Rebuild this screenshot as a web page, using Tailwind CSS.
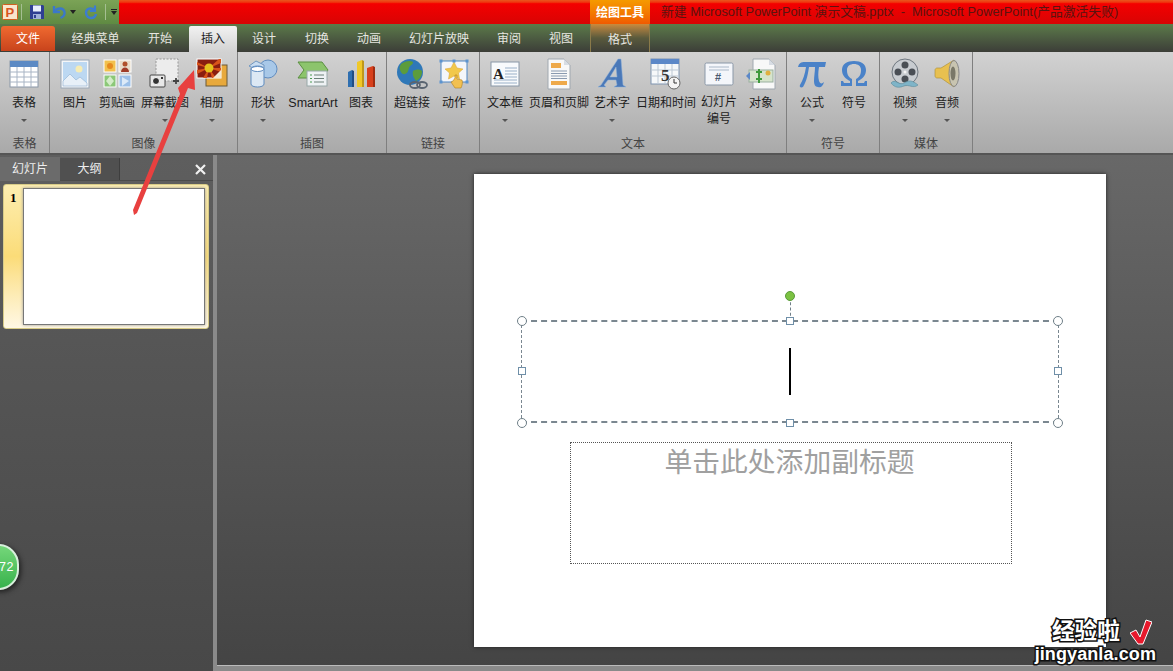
<!DOCTYPE html>
<html lang="zh-CN">
<head>
  <meta charset="utf-8" />
  <title>PowerPoint</title>
  <script src="https://cdn.jsdelivr.net/npm/@tailwindcss/browser@4"></script>
</head>
<body class="relative w-[1173px] h-[671px] overflow-hidden bg-[#4a4a4a] font-['Liberation_Sans','Noto_Sans_CJK_SC',sans-serif] text-[12px] text-[#1c1c1c]">

  <!-- title bar -->
  <div class="flex h-[24px] bg-gradient-to-b from-[#e8561e] via-[#f40000] via-[15%] to-[#d80404]">
    <div class="flex items-center w-[119px] h-full pl-[2px] bg-gradient-to-b from-[#7ba356] to-[#5f8a42]">
      <svg class="w-[16px] h-[16px] shrink-0" viewBox="0 0 16 16"><rect x=".5" y=".5" width="15" height="15" rx="1" fill="#f8e6cc" stroke="#d06020"/><text x="3.500" y="13" font-size="13" font-weight="700" fill="#d8541e" font-family="Liberation Sans">P</text></svg>
      <div class="w-px h-[16px] ml-[3px] bg-[#a5bf92]"></div>
      <svg class="w-[16px] h-[16px] ml-[7px] shrink-0" viewBox="0 0 16 16"><path d="M1 1h13l1 1v13H1z" fill="#2f3f92"/><rect x="4" y="1.500" width="8" height="6" fill="#e8eefb"/><rect x="4" y="10" width="8" height="5" fill="#9fb0d8"/><rect x="5" y="11" width="2" height="3" fill="#2f3f92"/></svg>
      <svg class="w-[15px] h-[16px] ml-[7px] shrink-0" viewBox="0 0 15 16"><path d="M2 2v6h6" fill="none" stroke="#3c78c8" stroke-width="2.400"/><path d="M2.500 7.500c3-4 9-4 10 .5 .5 3-1.500 5-4 6" fill="none" stroke="#3c78c8" stroke-width="2.400"/></svg>
      <svg class="w-[6px] h-[4px] ml-[3px] shrink-0" viewBox="0 0 6 4"><path d="M0 0h6L3 4z" fill="#222"/></svg>
      <svg class="w-[14px] h-[16px] ml-[8px] shrink-0" viewBox="0 0 14 16"><path d="M11 1.500v5.500H6" fill="none" stroke="#3c7cd0" stroke-width="2.200"/><path d="M10.500 6C7 3 2.200 4.500 2 8.500c-.1 3.500 2.500 5.500 5 5.500s4.500-1.500 5-4" fill="none" stroke="#3c7cd0" stroke-width="2.400"/></svg>
      <div class="w-px h-[16px] ml-[7px] bg-[#a5bf92]"></div>
      <div class="flex flex-col items-center gap-[1px] w-[7px] ml-[4px]"><div class="w-[6px] h-px bg-[#222]"></div><div class="w-0 h-0 border-x-[3px] border-x-transparent border-t-[4px] border-t-[#222]"></div></div>
    </div>
    <div class="w-[471px]"></div>
    <div class="flex items-center justify-center w-[60px] h-full pt-[1px] bg-gradient-to-b from-[#f59a00] to-[#f05a00] text-white font-bold">绘图工具</div>
    <div class="flex items-center pl-[11px] whitespace-nowrap text-[#5a1410] text-[12.8px]">新建 Microsoft PowerPoint 演示文稿.pptx&nbsp; -&nbsp; Microsoft PowerPoint(产品激活失败)</div>
  </div>

  <!-- tabs -->
  <div class="flex h-[28px] pt-[2px] bg-gradient-to-b from-[#5c7b49] to-[#3c3e38] text-[#e6e6e0]">
    <div class="flex items-center justify-center w-[54px] h-[25px] ml-px rounded-t-[3px] bg-gradient-to-b from-[#f06a30] to-[#c8431c] text-white">文件</div>
    <div class="flex items-center justify-center w-[81px]">经典菜单</div>
    <div class="flex items-center justify-center w-[48px]">开始</div>
    <div class="flex items-center justify-center w-[48px] h-[26px] ml-[5px] rounded-t-[2px] bg-gradient-to-b from-[#f2f2f2] to-[#d2d2d2] text-[#222]">插入</div>
    <div class="flex items-center justify-center w-[54px]">设计</div>
    <div class="flex items-center justify-center w-[52px]">切换</div>
    <div class="flex items-center justify-center w-[52px]">动画</div>
    <div class="flex items-center justify-center w-[88px]">幻灯片放映</div>
    <div class="flex items-center justify-center w-[52px]">审阅</div>
    <div class="flex items-center justify-center w-[52px]">视图</div>
    <div class="flex items-center justify-center w-[60px] -mt-[2px] pt-[4px] ml-[3px] border-x border-[#8a7a4a] bg-gradient-to-b from-[#c98a3c] via-[#5a5a3c] to-[#3e3f38]">格式</div>
  </div>

  <!-- ribbon -->
  <div class="flex h-[103px] bg-gradient-to-b from-[#d2d2d2] to-[#a9a9a9] border-b-2 border-[#555]">

    <div class="flex flex-col w-[50px] border-r border-[#7f7f7f]">
      <div class="flex flex-1">
        <div class="flex flex-col items-center w-[48px] pt-[6px]">
          <svg class="w-[32px] h-[32px]" viewBox="0 0 32 32"><rect x="2" y="3" width="28" height="26" fill="#fff" stroke="#8a97a8"/><rect x="2" y="3" width="28" height="6" fill="#5c8ac4"/><path d="M2 14h28M2 19h28M2 24h28M9 9v20M16 9v20M23 9v20" stroke="#a8b4c4"/></svg>
          <span class="mt-[4px] whitespace-nowrap">表格</span>
          <div class="w-0 h-0 mt-[7px] border-x-[3px] border-x-transparent border-t-[3px] border-t-[#555]"></div>
        </div>
      </div>
      <div class="h-[18px] text-center text-[#444]">表格</div>
    </div>

    <div class="flex flex-col w-[188px] border-r border-[#7f7f7f]">
      <div class="flex flex-1 pl-[4px]">
        <div class="flex flex-col items-center w-[42px] pt-[6px]">
          <svg class="w-[32px] h-[32px]" viewBox="0 0 32 32"><rect x="2" y="2" width="28" height="28" fill="#f4f6f8" stroke="#9aa8b8"/><rect x="4" y="4" width="24" height="24" fill="#bcd8f2"/><circle cx="20" cy="11" r="3.500" fill="#f6ecb4"/><path d="M4 28v-5l7-7 6 6 4-3 7 6v3z" fill="#e8f0f8" stroke="#8fb0d0" stroke-width=".6"/></svg>
          <span class="mt-[4px] whitespace-nowrap">图片</span>
        </div>
        <div class="flex flex-col items-center w-[42px] pt-[6px]">
          <svg class="w-[32px] h-[32px]" viewBox="0 0 32 32"><rect x="3" y="2" width="12" height="12" fill="#f2c14e" stroke="#fff"/><circle cx="9" cy="8" r="3" fill="#e68a1e"/><rect x="18" y="2" width="12" height="12" fill="#e8dcc8" stroke="#fff"/><circle cx="24" cy="6" r="2.500" fill="#b0502a"/><path d="M20 14c0-6 8-6 8 0z" fill="#a03c28"/><rect x="3" y="17" width="12" height="12" fill="#8cc878" stroke="#fff"/><path d="M9 18l4 5-4 5-4-5z" fill="#d4ecc8"/><rect x="18" y="17" width="12" height="12" fill="#9cc0e8" stroke="#fff"/><path d="M21 19l7 4-7 5z" fill="#dceaf8"/></svg>
          <span class="mt-[4px] whitespace-nowrap">剪贴画</span>
        </div>
        <div class="flex flex-col items-center w-[54px] pt-[6px]">
          <svg class="w-[32px] h-[32px]" viewBox="0 0 32 32"><rect x="7" y="1" width="22" height="22" fill="#ececec" stroke="#999" stroke-dasharray="2 1.500"/><rect x="1" y="17" width="15" height="12" rx="1" fill="#e8e8e8" stroke="#444"/><circle cx="7" cy="23" r="3.500" fill="#333" stroke="#fff"/><rect x="12" y="19" width="2" height="2" fill="#333"/><path d="M24 23h6M27 20v6" stroke="#444" stroke-width="1.800"/></svg>
          <span class="mt-[4px] whitespace-nowrap">屏幕截图</span>
          <div class="w-0 h-0 mt-[7px] border-x-[3px] border-x-transparent border-t-[3px] border-t-[#555]"></div>
        </div>
        <div class="flex flex-col items-center w-[40px] pt-[6px]">
          <svg class="w-[32px] h-[32px]" viewBox="0 0 32 32"><rect x="10" y="7" width="21" height="21" fill="#e8a93c" stroke="#6b5a3a"/><rect x="1" y="1" width="24" height="19" fill="#8a1e10" stroke="#fff"/><path d="M13 10L1 4v3l12 3-12 2v4l12-6-6 10h4l2-10 3 10h4l-7-10 12 4v-4l-12 0 12-5V1h-2z" fill="#d8541a"/><circle cx="13" cy="10" r="4.500" fill="#e4c21c"/><path d="M25 12v8h-8z" fill="#f4e8d0"/></svg>
          <span class="mt-[4px] whitespace-nowrap">相册</span>
          <div class="w-0 h-0 mt-[7px] border-x-[3px] border-x-transparent border-t-[3px] border-t-[#555]"></div>
        </div>
      </div>
      <div class="h-[18px] text-center text-[#444]">图像</div>
    </div>

    <div class="flex flex-col w-[149px] border-r border-[#7f7f7f]">
      <div class="flex flex-1 pl-[8px]">
        <div class="flex flex-col items-center w-[34px] pt-[6px]">
          <svg class="w-[32px] h-[32px]" viewBox="0 0 32 32"><circle cx="21" cy="11" r="9" fill="#a8c8e8" stroke="#5f8cc0"/><path d="M2 8l7-5 8 4v3H6z" fill="#c8dcf0" stroke="#6f96c0"/><path d="M4 11v15c0 4 13 4 13 0V11c0-4-13-4-13 0z" fill="#dce8f4" stroke="#5f8cc0"/><ellipse cx="10.500" cy="11" rx="6.500" ry="2.500" fill="#fff" stroke="#5f8cc0"/></svg>
          <span class="mt-[4px] whitespace-nowrap">形状</span>
          <div class="w-0 h-0 mt-[7px] border-x-[3px] border-x-transparent border-t-[3px] border-t-[#555]"></div>
        </div>
        <div class="flex flex-col items-center w-[66px] pt-[6px]">
          <svg class="w-[32px] h-[32px]" viewBox="0 0 32 32"><path d="M1 4h24l6 8-6 8H1l6-8z" fill="#8cc46c" stroke="#5a9040"/><rect x="10" y="13" width="20" height="15" fill="#eef2f4" stroke="#98a8a8"/><path d="M17 17h10M17 20.500h10M17 24h10" stroke="#6c8078"/><path d="M13 17h2M13 20.500h2M13 24h2" stroke="#4a9a50"/></svg>
          <span class="mt-[4px] whitespace-nowrap text-[12.500px]">SmartArt</span>
        </div>
        <div class="flex flex-col items-center w-[30px] pt-[6px]">
          <svg class="w-[32px] h-[32px]" viewBox="0 0 32 32"><path d="M3 14l4-2v17H3z" fill="#2f6fb0"/><path d="M7 12l2 1v16H7z" fill="#1f4c84"/><path d="M12 4l5-2v27h-5z" fill="#f0c828"/><path d="M17 2l2 1v26h-2z" fill="#c09818"/><path d="M22 10l6-2v21h-6z" fill="#d8401c"/><path d="M28 8l2 1v20h-2z" fill="#a02c10"/></svg>
          <span class="mt-[4px] whitespace-nowrap">图表</span>
        </div>
      </div>
      <div class="h-[18px] text-center text-[#444]">插图</div>
    </div>

    <div class="flex flex-col w-[93px] border-r border-[#7f7f7f]">
      <div class="flex flex-1 pl-[3px]">
        <div class="flex flex-col items-center w-[44px] pt-[6px]">
          <svg class="w-[32px] h-[32px]" viewBox="0 0 32 32"><circle cx="14" cy="14" r="13" fill="#2f78b8"/><path d="M5 6c4-3 9-4 12-2 0 3-3 3-4 6s-1 5-4 6-4-2-5-4 0-4 1-6zM17 13c3-2 7-2 9 0 0 5-2 8-6 10-2-3-4-6-3-10z" fill="#5c9c3c"/><ellipse cx="19" cy="27" rx="5" ry="3" fill="none" stroke="#5a6470" stroke-width="1.800"/><ellipse cx="26" cy="27" rx="5" ry="3" fill="none" stroke="#5a6470" stroke-width="1.800"/></svg>
          <span class="mt-[4px] whitespace-nowrap">超链接</span>
        </div>
        <div class="flex flex-col items-center w-[40px] pt-[6px]">
          <svg class="w-[32px] h-[32px]" viewBox="0 0 32 32"><rect x="3" y="3" width="26" height="21" fill="#f4f6fa" stroke="#4f86c4"/><path d="M16 4l3 6 6 1-4.500 4 1 6-5.500-3-5.500 3 1-6L7 11l6-1z" fill="#f2c84a" stroke="#d8a030" stroke-width=".5"/><path d="M17 20v-3h2v4l5 1c1 2 0 6-1 8h-6l-4-6 2-1z" fill="#f2c050" stroke="#b08020" stroke-width=".6"/><rect x="1.500" y="1.500" width="3" height="3" fill="#5c94d0"/><rect x="27.500" y="1.500" width="3" height="3" fill="#5c94d0"/><rect x="1.500" y="22.500" width="3" height="3" fill="#5c94d0"/><rect x="27.500" y="22.500" width="3" height="3" fill="#5c94d0"/><rect x="14.500" y="1.500" width="3" height="3" fill="#5c94d0"/></svg>
          <span class="mt-[4px] whitespace-nowrap">动作</span>
        </div>
      </div>
      <div class="h-[18px] text-center text-[#444]">链接</div>
    </div>

    <div class="flex flex-col w-[307px] border-r border-[#7f7f7f]">
      <div class="flex flex-1 pl-[4px]">
        <div class="flex flex-col items-center w-[42px] pt-[6px]">
          <svg class="w-[32px] h-[32px]" viewBox="0 0 32 32"><rect x="2" y="4" width="28" height="24" fill="#f8fafc" stroke="#8a98a8"/><text x="4" y="21" font-size="15" font-weight="700" fill="#222" font-family="Liberation Serif">A</text><path d="M16 10h12M16 13h12M16 16h12M16 19h12M5 22h23M5 25h23" stroke="#9ab0c8"/></svg>
          <span class="mt-[4px] whitespace-nowrap">文本框</span>
          <div class="w-0 h-0 mt-[7px] border-x-[3px] border-x-transparent border-t-[3px] border-t-[#555]"></div>
        </div>
        <div class="flex flex-col items-center w-[66px] pt-[6px]">
          <svg class="w-[32px] h-[32px]" viewBox="0 0 32 32"><path d="M5 1h16l6 6v24H5z" fill="#f8f8f8" stroke="#a0a8b0"/><path d="M21 1v6h6z" fill="#d8dde4"/><rect x="8" y="5" width="10" height="5" fill="#eea94a"/><path d="M8 13h16M8 15.500h16M8 18h16M8 20.500h16" stroke="#8a9ab0"/><rect x="8" y="23" width="16" height="4" fill="#eea94a"/></svg>
          <span class="mt-[4px] whitespace-nowrap">页眉和页脚</span>
        </div>
        <div class="flex flex-col items-center w-[40px] pt-[6px]">
          <svg class="w-[32px] h-[32px]" viewBox="0 0 32 32"><path d="M22 1h3l2 26 3 2H18l3-2-1-5h-8l-4 5 2 2H2l3-2L22 1zm-2 8l-6 10h7z" fill="#4a78b8" stroke="#8fb0d8" stroke-width=".5"/></svg>
          <span class="mt-[4px] whitespace-nowrap">艺术字</span>
          <div class="w-0 h-0 mt-[7px] border-x-[3px] border-x-transparent border-t-[3px] border-t-[#555]"></div>
        </div>
        <div class="flex flex-col items-center w-[68px] pt-[6px]">
          <svg class="w-[32px] h-[32px]" viewBox="0 0 32 32"><rect x="1" y="1" width="28" height="25" fill="#f6f8fa" stroke="#7f94b0"/><rect x="1" y="1" width="28" height="5" fill="#5c88c8"/><path d="M1 12h28M1 18h28M8 6v20M15 6v20M22 6v20" stroke="#bcc8d4"/><text x="11" y="23" font-size="17" font-weight="700" fill="#333" font-family="Liberation Serif">5</text><circle cx="24" cy="25" r="6" fill="#f4f4f4" stroke="#666"/><path d="M24 21v4h3" fill="none" stroke="#333"/></svg>
          <span class="mt-[4px] whitespace-nowrap">日期和时间</span>
        </div>
        <div class="flex flex-col items-center w-[38px] pt-[6px]">
          <svg class="w-[32px] h-[32px]" viewBox="0 0 32 32"><rect x="2" y="5" width="28" height="22" rx="1.500" fill="#f4f6fa" stroke="#8a98a8"/><path d="M6 9h20M6 12h20" stroke="#aab8c8"/><text x="12" y="23" font-size="11" font-weight="700" fill="#4a5a70" font-family="Liberation Sans">#</text></svg>
          <span class="mt-[4px] leading-[17px] text-center whitespace-nowrap">幻灯片<br />编号</span>
        </div>
        <div class="flex flex-col items-center w-[46px] pt-[6px]">
          <svg class="w-[32px] h-[32px]" viewBox="0 0 32 32"><path d="M8 1h16l6 6v24H8z" fill="#f8f8f8" stroke="#a0a8b0"/><path d="M24 1v6h6z" fill="#d8dde4"/><rect x="4" y="12" width="24" height="12" fill="#d6e4cc" stroke="#9ab0a0"/><path d="M1 18l4-4v8z" fill="#5c88c8"/><path d="M14 11v14M11 14h6M11 21h6" stroke="#3f9a3c" stroke-width="2"/><circle cx="23" cy="15" r="2.500" fill="#e0b040"/></svg>
          <span class="mt-[4px] whitespace-nowrap">对象</span>
        </div>
      </div>
      <div class="h-[18px] text-center text-[#444]">文本</div>
    </div>

    <div class="flex flex-col w-[93px] border-r border-[#7f7f7f]">
      <div class="flex flex-1 pl-[4px]">
        <div class="flex flex-col items-center w-[42px] pt-[6px]">
          <svg class="w-[32px] h-[32px]" viewBox="0 0 32 32"><path d="M2 9c1-4 3-5 7-5h21l-1 5h-6c-1 6-1 10 0 14 1 3 3 3 5 1-1 4-3 6-6 5-3 0-4-3-4-6 0-5 1-9 1-14h-6c-1 7-2 13-6 20-2 1-4 0-3-2 3-5 5-11 6-18-4 0-6 0-8 0z" fill="#4a82c8"/></svg>
          <span class="mt-[4px] whitespace-nowrap">公式</span>
          <div class="w-0 h-0 mt-[7px] border-x-[3px] border-x-transparent border-t-[3px] border-t-[#555]"></div>
        </div>
        <div class="flex flex-col items-center w-[42px] pt-[6px]">
          <svg class="w-[32px] h-[32px]" viewBox="0 0 32 32"><path d="M3 28v-5h2l1 2h6v-2c-4-2-8-5-8-11C4 6 9 3 16 3s12 3 12 9c0 6-4 9-8 11v2h6l1-2h2v5H18v-7c4-2 5-5 5-9 0-4-3-6-7-6s-7 2-7 6c0 4 1 7 5 9v7z" fill="#4a82c8"/></svg>
          <span class="mt-[4px] whitespace-nowrap">符号</span>
        </div>
      </div>
      <div class="h-[18px] text-center text-[#444]">符号</div>
    </div>

    <div class="flex flex-col w-[93px] border-r border-[#7f7f7f]">
      <div class="flex flex-1 pl-[4px]">
        <div class="flex flex-col items-center w-[42px] pt-[6px]">
          <svg class="w-[32px] h-[32px]" viewBox="0 0 32 32"><circle cx="16" cy="14" r="13" fill="#c8ccd0" stroke="#707880"/><circle cx="16" cy="7" r="3.500" fill="#4a4f55"/><circle cx="9" cy="14" r="3.500" fill="#4a4f55"/><circle cx="23" cy="14" r="3.500" fill="#4a4f55"/><circle cx="16" cy="21" r="3.500" fill="#4a4f55"/><circle cx="16" cy="14" r="1.500" fill="#f4f4f4"/><path d="M2 25c4-5 8 3 13 0s8-3 14 2c-5 4-9-1-14 1s-9 2-13-3z" fill="#7fb4c8" stroke="#5a8a98" stroke-width=".6"/></svg>
          <span class="mt-[4px] whitespace-nowrap">视频</span>
          <div class="w-0 h-0 mt-[7px] border-x-[3px] border-x-transparent border-t-[3px] border-t-[#555]"></div>
        </div>
        <div class="flex flex-col items-center w-[42px] pt-[6px]">
          <svg class="w-[32px] h-[32px]" viewBox="0 0 32 32"><path d="M4 12c0-1 1-2 2-2h4l13-8c2 4 3 8 3 13s-1 9-3 14L10 20H6c-1 0-2-1-2-2z" fill="#e8c050" stroke="#a88c30" stroke-width=".6"/><ellipse cx="23" cy="15.500" rx="5" ry="13" fill="#c8c4b0" stroke="#888"/><ellipse cx="22" cy="15.500" rx="2.500" ry="7" fill="#7a7868"/></svg>
          <span class="mt-[4px] whitespace-nowrap">音频</span>
          <div class="w-0 h-0 mt-[7px] border-x-[3px] border-x-transparent border-t-[3px] border-t-[#555]"></div>
        </div>
      </div>
      <div class="h-[18px] text-center text-[#444]">媒体</div>
    </div>
  </div>

  <!-- work area -->
  <div class="flex h-[516px]">
    <div class="flex flex-col w-[213px] pt-[3px] bg-gradient-to-b from-[#5e5e5e] to-[#484848]">
      <div class="flex items-center h-[23px] border-b border-[#4a4a4a] text-[#eeeeee]">
        <div class="flex items-center justify-center w-[60px] h-[24px] bg-[#6b6b6b]">幻灯片</div>
        <div class="flex items-center justify-center w-[60px] h-full border-r border-[#3e3e3e] bg-[#505050]">大纲</div>
        <svg class="w-[11px] h-[11px] ml-[75px]" viewBox="0 0 11 11"><path d="M1 1l9 9M10 1l-9 9" stroke="#f0f0f0" stroke-width="2.200"/></svg>
      </div>
      <div class="flex w-[206px] h-[145px] mt-[3px] ml-[3px] pt-[3px] rounded-[3px] border border-[#d8cc88] bg-gradient-to-b from-[#fdeeb0] via-[#fbdc78] to-[#fff8e4]">
        <span class="w-[19px] pl-[6px] font-['Liberation_Serif',serif] font-bold text-[13px] text-black">1</span>
        <div class="w-[182px] h-[137px] bg-white border border-[#777] shadow-[0_0_3px_#999]"></div>
      </div>
    </div>
    <div class="w-[4px] bg-[#8a8a8a]"></div>
    <div class="flex-1 pl-[257px] pt-[19px] bg-gradient-to-b from-[#686868] to-[#444444]">
      <!-- slide canvas -->
      <div class="relative w-[632px] h-[473px] bg-white shadow-[0_0_4px_#222]">
        <div class="absolute left-[47px] top-[146px] w-[538px] h-[103px] border-x border-y-2 border-dashed border-[#7a8790]"></div>
        <div class="absolute left-[316px] top-[123px] h-[24px] border-l border-dashed border-[#6f7f88]"></div>
        <div class="absolute left-[311px] top-[117px] w-[10px] h-[10px] rounded-full bg-[#7cc242] border border-[#5a9a3c]"></div>
        <div class="absolute left-[43px] top-[142px] w-[10px] h-[10px] rounded-full bg-white border border-[#6f7f88]"></div>
        <div class="absolute left-[579px] top-[142px] w-[10px] h-[10px] rounded-full bg-white border border-[#6f7f88]"></div>
        <div class="absolute left-[43px] top-[244px] w-[10px] h-[10px] rounded-full bg-white border border-[#6f7f88]"></div>
        <div class="absolute left-[579px] top-[244px] w-[10px] h-[10px] rounded-full bg-white border border-[#6f7f88]"></div>
        <div class="absolute left-[312px] top-[143px] w-[8px] h-[8px] bg-white border border-[#6f8fa8]"></div>
        <div class="absolute left-[312px] top-[245px] w-[8px] h-[8px] bg-white border border-[#6f8fa8]"></div>
        <div class="absolute left-[44px] top-[193px] w-[8px] h-[8px] bg-white border border-[#6f8fa8]"></div>
        <div class="absolute left-[580px] top-[193px] w-[8px] h-[8px] bg-white border border-[#6f8fa8]"></div>
        <div class="absolute left-[315px] top-[174px] w-[2px] h-[47px] bg-black"></div>
        <div class="absolute left-[96px] top-[268px] w-[442px] h-[122px] pr-[3px] border border-dotted border-[#555] text-center text-[27.8px] leading-[40px] text-[#a0a0a0]">单击此处添加副标题</div>
      </div>
    </div>
  </div>

  <!-- bottom scrollbar strip -->
  <div class="absolute left-[217px] top-[665px] w-[956px] h-[6px] bg-[#8a8a8a] border-t border-[#bbb]"></div>

  <!-- annotation arrow over the screenshot -->
  <svg class="absolute left-0 top-0 w-[1173px] h-[671px] pointer-events-none" viewBox="0 0 1173 671"><path d="M194 70L195 90 188 88 137 213 134 215 133 210 180 94 178 88z" fill="#e8403f"/></svg>

  <!-- floating badge -->
  <div class="absolute -left-[22px] top-[544px] flex items-center justify-end w-[41px] h-[46px] pr-[3px] rounded-full border-2 border-[#d8f0dc] bg-gradient-to-b from-[#74d77a] to-[#35b24c] text-white text-[12.500px] tracking-[0.5px] shadow-[2px_2px_5px_#222]">72</div>

  <!-- watermark -->
  <div class="absolute left-[1034px] top-[618px] flex flex-col items-end w-[122px]">
    <div class="flex items-center gap-[10px] pr-[4px]">
      <span class="font-bold text-[22.700px] leading-[27px] text-white [-webkit-text-stroke:3px_#111] [paint-order:stroke_fill]">经验啦</span>
      <svg class="w-[22px] h-[26px]" viewBox="0 0 22 26"><path d="M0 14l6-3 4 7L16 1l6 2-9 22H8z" fill="#e8192c" stroke="#fff"/></svg>
    </div>
    <span class="font-bold text-[18px] leading-[19px] tracking-[0.100px] text-white font-['Liberation_Sans',sans-serif] [-webkit-text-stroke:3px_#111] [paint-order:stroke_fill]">jingyanla.com</span>
  </div>

</body>
</html>
